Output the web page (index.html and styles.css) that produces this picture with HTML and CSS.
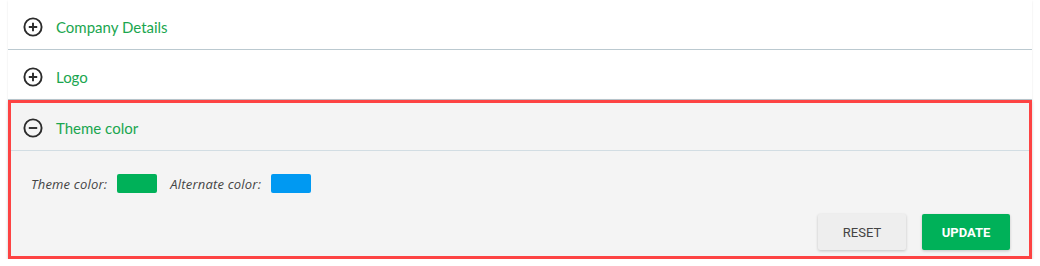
FILE: index.html
```html
<!DOCTYPE html>
<html lang="en">
<head>
	<meta charset="UTF-8">
	<title>Settings</title>
	<link rel="stylesheet" href="styles.css">
</head>
<body>
	<div class="accordion">
		<div class="panel">
			<div class="panel-head">
				<svg class="toggle" width="20" height="20" viewBox="0 0 20 20"><circle cx="10" cy="10" r="8.6" fill="none" stroke="#2b2b2b" stroke-width="1.9"/><path d="M5.8 10h8.4M10 5.8v8.4" stroke="#2b2b2b" stroke-width="1.9"/></svg>
				<span class="title">Company Details</span>
			</div>
		</div>
		<div class="panel">
			<div class="panel-head">
				<svg class="toggle" width="20" height="20" viewBox="0 0 20 20"><circle cx="10" cy="10" r="8.6" fill="none" stroke="#2b2b2b" stroke-width="1.9"/><path d="M5.8 10h8.4M10 5.8v8.4" stroke="#2b2b2b" stroke-width="1.9"/></svg>
				<span class="title">Logo</span>
			</div>
		</div>
		<div class="panel open">
			<div class="panel-head">
				<svg class="toggle" width="20" height="20" viewBox="0 0 20 20"><circle cx="10" cy="10" r="8.6" fill="none" stroke="#2b2b2b" stroke-width="1.9"/><path d="M5.8 10h8.4" stroke="#2b2b2b" stroke-width="1.9"/></svg>
				<span class="title">Theme color</span>
			</div>
			<div class="panel-body">
				<div class="colors">
					<label>Theme color:</label>
					<span class="swatch" style="background-color: #00b159"></span>
					<label>Alternate color:</label>
					<span class="swatch" style="background-color: #0099f2"></span>
				</div>
				<div class="actions">
					<button type="button" class="btn btn-reset">Reset</button>
					<button type="button" class="btn btn-update">Update</button>
				</div>
			</div>
		</div>
	</div>
</body>
</html>
```

FILE: styles.css
```css
* {
	margin: 0;
	padding: 0;
	box-sizing: border-box;
}
body {
	background-color: white;
	font-family: Lato, "Open Sans", sans-serif;
}
.accordion {
	padding: 0 8px;
}
.panel {
	background-color: white;
	border-bottom: 1px solid #bccad1;
	box-shadow: 0 1px 2px rgba(0,0,0,0.1);
}
.panel-head {
	display: flex;
	align-items: center;
	height: 49px;
	padding: 4px 0 0 15px;
}
.toggle {
	margin-right: 13px;
}
.title {
	color: #1aa64f;
	font-size: 15px;
}
.open {
	background-color: #f4f4f4;
	outline: 3px solid #fd4343;
	outline-offset: -3px;
	border-bottom: none;
	box-shadow: 0 1px 3px rgba(0,0,0,0.2);
}
.open .panel-head {
	border-bottom: 1px solid #d2dde3;
	height: 51px;
	padding-top: 6px;
}
.panel-body {
	padding: 23px 22px 9px 23px;
}
.colors {
	display: flex;
	align-items: center;
}
.colors label {
	font-family: "Open Sans", sans-serif;
	font-style: italic;
	font-size: 13px;
	letter-spacing: 0.2px;
	color: #444;
	margin-right: 10px;
}
.swatch {
	width: 40px;
	height: 19px;
	border-radius: 2px;
	margin-right: 13px;
}
.actions {
	display: flex;
	justify-content: flex-end;
	gap: 16px;
	margin-top: 21px;
}
.btn {
	width: 88px;
	height: 36px;
	border: none;
	border-radius: 2px;
	font-family: Roboto, sans-serif;
	font-size: 13px;
	text-transform: uppercase;
	box-shadow: 0 1px 3px rgba(0,0,0,0.2);
	cursor: pointer;
}
.btn-reset {
	background-color: #eeeeee;
	color: #444;
}
.btn-update {
	background-color: #00b159;
	color: white;
	font-weight: bold;
}
```
